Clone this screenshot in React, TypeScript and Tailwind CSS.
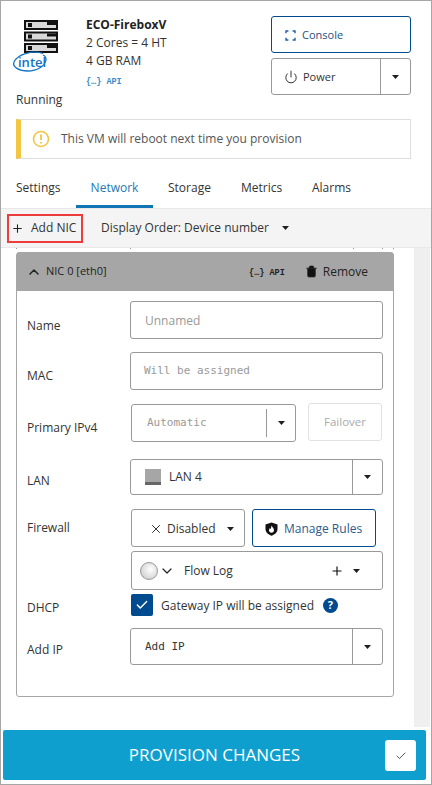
import React from "react";
import { ChevronDown, ChevronUp, Check, Plus, Power, Trash2, X } from "lucide-react";

const Caret = ({ className = "" }: { className?: string }) => (
  <svg width="7" height="4" viewBox="0 0 7 4" className={className}>
    <path d="M0 0h7L3.500 4z" fill="#1f1f1f" />
  </svg>
);

const ApiTag = ({ color }: { color: string }) => (
  <span className={`text-[8.500px] font-bold font-['Liberation_Mono',monospace] ${color}`}>
    {"{…}"} API
  </span>
);

const ServerLogo = () => (
  <svg width="48" height="58" viewBox="0 0 48 58" className="shrink-0 overflow-visible">
    {[0, 1, 2].map((i) => (
      <g key={i} transform={`translate(8 ${i * 11.500 + 4})`}>
        <rect width="34" height="10" fill="#111" />
        <rect x="2" y="2" width="30" height="6" fill="#d9d9d9" />
        <rect x="4" y="3" width="4" height="4" fill="#111" />
        <rect x="23" y="2" width="9" height="3" fill="#111" />
      </g>
    ))}
    <path d="M27 37.500C17 34 2 38 -2 46c-2 5 5 9 14 9 9 0 17-5 18-11 0.300-2-1-4-3-5" fill="none" stroke="#1174c4" strokeWidth="1.300" />
    <text x="2" y="51" fontSize="13" fontWeight="600" fill="#1174c4" fontFamily="Open Sans, sans-serif">intel</text>
  </svg>
);

const Row = ({ label, labelClass, className, children }: { label?: string; labelClass: string; className: string; children: React.ReactNode }) => (
  <div className={`flex ${className}`}>
    <div className={`w-[103px] shrink-0 text-[12px] leading-[18px] text-[#333] ${labelClass}`}>{label}</div>
    {children}
  </div>
);

export default function App() {
  return (
    <div className="w-[432px] h-[785px] overflow-hidden border border-[#a6a6a6] bg-white font-['Open_Sans',sans-serif] text-[#333] flex flex-col">
      {/* vm header */}
      <div className="flex pl-[15px] pr-5 pt-[15px] h-[116px] shrink-0">
        <div className="w-[70px] shrink-0">
          <ServerLogo />
          <div className="text-[12px] leading-[18px] mt-[17px]">Running</div>
        </div>
        <div className="flex-1 text-[12px] leading-[18px]">
          <div className="font-bold text-[#222]">ECO-FireboxV</div>
          <div>2 Cores = 4 HT</div>
          <div>4 GB RAM</div>
          <div className="leading-[20px]">
            <ApiTag color="text-[#3d8ac7]" />
          </div>
        </div>
        <div className="w-[140px] shrink-0 flex flex-col gap-[5px]">
          <div className="h-[37px] border border-[#004a8f] rounded-[3px] flex items-center pl-[13px] pt-[1px] text-[11px] text-[#1f4f7f]">
            <svg width="11" height="11" viewBox="0 0 11 11" fill="none" stroke="#1d5ea8" strokeWidth="1.400" className="mr-[6px]">
              <path d="M1 3.200V1h2.400M7.600 1H10v2.200M10 7.800V10H7.600M3.400 10H1V7.800" />
            </svg>
            Console
          </div>
          <div className="h-[37px] border border-[#999] rounded-[3px] flex items-center text-[11px]">
            <div className="flex-1 flex items-center pl-[12px] pt-[1px] gap-[5px] h-full border-r border-[#999]">
              <Power size={14} strokeWidth={1.600} color="#222" />
              Power
            </div>
            <div className="w-[29px] flex justify-center">
              <Caret />
            </div>
          </div>
        </div>
      </div>

      {/* reboot notice */}
      <div className="ml-[15px] mr-5 mt-[2px] h-[40px] shrink-0 border border-[#dedede] border-l-[5px] border-l-[#f4c542] flex items-center pl-[11px] text-[12px] text-[#555]">
        <svg width="18" height="18" viewBox="0 0 18 18" fill="none" className="mr-[11px]">
          <circle cx="9" cy="9" r="7.500" stroke="#f4c542" strokeWidth="1.600" />
          <path d="M9 4.500v5.500M9 12v1.600" stroke="#f4c542" strokeWidth="1.800" />
        </svg>
        This VM will reboot next time you provision
      </div>

      {/* tabs */}
      <div className="mt-[10px] h-[39px] shrink-0 flex items-end pl-[15px] text-[12px] text-[#333]">
        <div className="w-[60px] h-[39px] pt-[10px]">Settings</div>
        <div className="w-[77px] h-[39px] pt-[10px] text-center text-[#1f77b4] border-b-[3px] border-[#0f75b5]">Network</div>
        <div className="w-[88px] h-[39px] pt-[10px] pl-[15px]">Storage</div>
        <div className="w-[71px] h-[39px] pt-[10px]">Metrics</div>
        <div className="h-[39px] pt-[10px]">Alarms</div>
      </div>

      {/* toolbar */}
      <div className="h-[40px] shrink-0 bg-[#f4f4f4] border-y border-[#e8e8e8] flex items-center pl-[6px] text-[12px] text-[#333]">
        <div className="h-[29px] w-[76px] border-2 border-[#ee3b3b] flex items-center pl-[2px] gap-[7px]">
          <Plus size={13} strokeWidth={2} color="#222" />
          Add NIC
        </div>
        <div className="ml-[18px]">Display Order: Device number</div>
        <Caret className="ml-[13px]" />
      </div>

      {/* nic list */}
      <div className="flex-1 min-h-0 flex">
        <div className="flex-1 min-w-0 pl-[15px]">
          <div className="h-[1px] flex">
            <div className="w-[114px] border-l border-[#999]" />
            <div className="w-[223px] border-l border-[#999]" />
            <div className="w-[29px] border-l border-[#999]" />
            <div className="w-[11px] border-l border-[#999]" />
            <div className="w-[1px] border-l border-[#999]" />
          </div>
          <div className="mt-[3px] w-[378px] h-[445px] border border-[#a6a6a6] rounded-[3px]">
            <div className="h-[38px] pb-[1px] bg-[#a6a6a6] flex items-center pl-[9px] pr-[25px] text-[11px] text-[#222]">
              <ChevronUp size={16} strokeWidth={2.200} />
              <span className="ml-[4px]">NIC 0 [eth0]</span>
              <span className="ml-auto">
                <ApiTag color="text-[#222]" />
              </span>
              <Trash2 size={13} fill="#111" strokeWidth={1.500} className="ml-[20px] mr-[5px]" />
              <span className="text-[12px]">Remove</span>
            </div>
            <div className="pl-[10px] pr-[10px] pt-[10px]">
              <Row label="Name" labelClass="pt-[16px]" className="h-[51px]">
                <div className="w-[253px] h-[38px] border border-[#999] rounded-[3px] pl-[14px] pt-[1px] flex items-center text-[12px] text-[#999]">
                  Unnamed
                </div>
              </Row>
              <Row label="MAC" labelClass="pt-[15px]" className="h-[52px]">
                <div className="w-[253px] h-[38px] border border-[#999] rounded-[3px] pl-[13px] pt-[1px] flex items-center text-[11px] text-[#999] font-['DejaVu_Sans_Mono',monospace]">
                  Will be assigned
                </div>
              </Row>
              <Row label="Primary IPv4" labelClass="pt-[15px]" className="h-[55px]">
                <div className="ml-[1px] w-[165px] h-[38px] border border-[#999] rounded-[3px] flex items-center text-[11px] text-[#999] font-['DejaVu_Sans_Mono',monospace]">
                  <div className="pl-[15px] pt-[1px] w-[135px] h-[28px] flex items-center border-r border-[#999]">Automatic</div>
                  <div className="flex-1 flex justify-center"><Caret /></div>
                </div>
                <div className="ml-[12px] -mt-[1px] w-[74px] h-[38px] border border-[#e2e2e2] rounded-[3px] flex items-center justify-center text-[11.500px] text-[#aaa]">
                  Failover
                </div>
              </Row>
              <Row label="LAN" labelClass="pt-[13px]" className="h-[50px]">
                <div className="w-[253px] h-[36px] border border-[#999] rounded-[3px] flex items-center text-[12px] text-[#333]">
                  <div className="ml-[14px] w-4 h-4 bg-[#a6a6a6] border-b-[3px] border-[#666] mr-2" />
                  <span className="flex-1">LAN 4</span>
                  <div className="w-[30px] h-full border-l border-[#999] flex items-center justify-center"><Caret /></div>
                </div>
              </Row>
              <Row label="Firewall" labelClass="pt-[10px]" className="h-[42px]">
                <div className="ml-[1px] w-[114px] h-[38px] border border-[#999] rounded-[3px] flex items-center pl-[17px] pt-[1px] text-[12px]">
                  <X size={14} strokeWidth={1.600} color="#222" className="mr-[4px]" />
                  Disabled
                  <Caret className="ml-[11px]" />
                </div>
                <div className="ml-[7px] w-[124px] h-[38px] border border-[#004a8f] rounded-[3px] flex items-center pl-[12px] pt-[1px] text-[12px] text-[#2c5a8c]">
                  <svg width="13" height="14" viewBox="0 0 13 14" className="mr-[6px]">
                    <path d="M6.500 0.500 12.500 2.500V7c0 3.300-2.600 5.500-6 6.700C3.100 12.500 0.500 10.300 0.500 7V2.500z" fill="#111" />
                    <path d="M6.500 3.500c0.300 1.500 2.500 2.500 2.500 4.700 0 1.500-1.100 2.500-2.500 2.500S4 9.700 4 8.200c0-1 0.600-1.500 1-2.200 0.300 0.700 0.600 1 0.900 1 0.300-1 0.200-2.300 0.600-3.500z" fill="#fff" />
                  </svg>
                  Manage Rules
                </div>
              </Row>
              <Row labelClass="" className="h-[43px]">
                <div className="ml-[1px] w-[252px] h-[39px] border border-[#999] rounded-[3px] flex items-center pl-[8px] text-[12px]">
                  <div className="w-[18px] h-[18px] rounded-full border border-[#999] bg-[radial-gradient(circle_at_60%_40%,#ffffff,#c4c4c4)]" />
                  <ChevronDown size={16} strokeWidth={1.800} color="#222" className="ml-[1px]" />
                  <span className="ml-[9px] flex-1">Flow Log</span>
                  <Plus size={14} strokeWidth={2} color="#111" />
                  <Caret className="ml-[9px] mr-[22px]" />
                </div>
              </Row>
              <Row label="DHCP" labelClass="pt-[5px]" className="h-[34px]">
                <div className="ml-[1px] flex items-start text-[12px]">
                  <div className="w-[22px] h-[22px] rounded-[2px] bg-[#004a8f] flex items-center justify-center">
                    <Check size={14} strokeWidth={2.500} color="#fff" />
                  </div>
                  <span className="ml-2 mt-[1px] leading-[22px]">Gateway IP will be assigned</span>
                  <div className="ml-[9px] mt-[4px] w-[15px] h-[15px] rounded-full bg-[#004a8f] text-white text-[11px] font-bold flex items-center justify-center">?</div>
                </div>
              </Row>
              <Row label="Add IP" labelClass="pt-[13px]" className="h-[37px]">
                <div className="w-[253px] h-[37px] border border-[#999] rounded-[3px] flex items-center text-[11px] text-[#333] font-['DejaVu_Sans_Mono',monospace]">
                  <span className="flex-1 pl-[14px] pt-[2px]">Add IP</span>
                  <div className="w-[30px] h-full border-l border-[#999] flex items-center justify-center"><Caret /></div>
                </div>
              </Row>
            </div>
          </div>
        </div>
        <div className="w-4 h-[479px] mr-[1px] shrink-0 bg-[#efefef]" />
      </div>

      {/* provision */}
      <div className="ml-[2px] mr-[5px] mb-[4px] h-[50px] shrink-0 rounded-[2px] bg-[#0e9fcf] flex items-center relative">
        <div className="flex-1 text-center text-[17px] text-white">PROVISION CHANGES</div>
        <div className="absolute right-[10px] top-[10px] w-[31px] h-[31px] bg-white rounded-[3px] flex items-center justify-center">
          <Check size={12} strokeWidth={1.500} color="#222" />
        </div>
      </div>
    </div>
  );
}
